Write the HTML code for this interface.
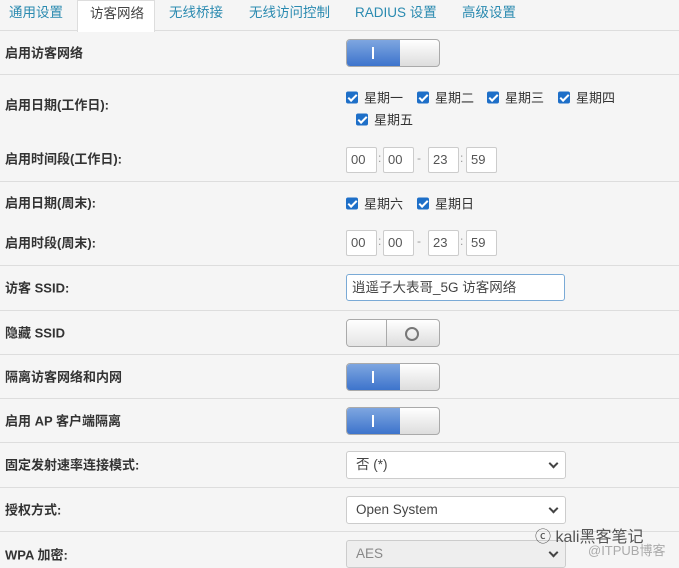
<!DOCTYPE html><html><head><meta charset="utf-8"><style>
body{margin:0;width:679px;height:563px;background:#f5f5f5;font-family:"Liberation Sans","Noto Sans CJK SC",sans-serif;position:relative;overflow:hidden;font-size:13px;color:#333}
.a{position:absolute}
.tabs{left:0;top:0;width:679px;height:30px;border-bottom:1px solid #ddd;background:#f5f5f5}
.tab{position:absolute;top:0;height:30px;line-height:25px;color:#2a8ab0;font-size:13.5px}
.act{background:#fff;color:#444;border:1px solid #ddd;border-bottom:none;height:31px}
.hr{position:absolute;left:0;width:679px;height:1px;background:#ddd}
.lb{position:absolute;left:5px;font-weight:bold;font-size:13px;color:#333;transform:translateY(-50%)}
.sw{position:absolute;left:346px;width:92px;height:26px;border:1px solid #aaa;border-radius:4px;overflow:hidden;background:linear-gradient(#fff,#ddd)}
.sw .on{position:absolute;left:0;top:0;width:53px;height:26px;background:linear-gradient(#7ea6e0,#3d74cc);}
.sw .on:after{content:"";position:absolute;left:25px;top:7px;width:2px;height:12px;background:#fff}
.sw .off{position:absolute;left:0;top:0;width:39px;height:26px;border-right:1px solid #aaa;background:linear-gradient(#fff,#e4e4e4)}
.cb{position:absolute;font-size:13px;color:#333;transform:translateY(-50%)}
.cb i{display:inline-block;width:12px;height:12px;background:#1e6fc8;border-radius:2px;vertical-align:-1px;margin-right:6px;position:relative}
.cb i:after{content:"";position:absolute;left:4px;top:1px;width:3px;height:7px;border:solid #fff;border-width:0 2px 2px 0;transform:rotate(45deg)}
.tb{position:absolute;width:29px;height:24px;background:#fff;border:1px solid #ccc;border-radius:2px;line-height:24px;text-indent:4px;color:#555;font-size:13px}
.sep{position:absolute;color:#999;font-size:12px}
.sel{position:absolute;left:346px;width:218px;height:26px;background:#fff;border:1px solid #ccc;border-radius:3px;line-height:26px;text-indent:9px;color:#444;font-size:13.5px}
.sel:after{content:"";position:absolute;right:8px;top:8px;width:5px;height:5px;border:solid #444;border-width:0 2px 2px 0;transform:rotate(45deg)}
</style></head><body>
<div class="a tabs"></div>
<div class="tab" style="left:9px">通用设置</div>
<div class="tab act" style="left:77px;width:76px;text-indent:12px">访客网络</div>
<div class="tab" style="left:169px">无线桥接</div>
<div class="tab" style="left:249px">无线访问控制</div>
<div class="tab" style="left:355px">RADIUS 设置</div>
<div class="tab" style="left:462px">高级设置</div>

<div class="lb" style="top:52px">启用访客网络</div>
<div class="sw" style="top:39px"><div class="on"></div></div>
<div class="hr" style="top:74px"></div>

<div class="lb" style="top:104px">启用日期(工作日):</div>
<div class="cb" style="left:346px;top:97px"><i></i>星期一</div>
<div class="cb" style="left:417px;top:97px"><i></i>星期二</div>
<div class="cb" style="left:487px;top:97px"><i></i>星期三</div>
<div class="cb" style="left:558px;top:97px"><i></i>星期四</div>
<div class="cb" style="left:356px;top:119px"><i></i>星期五</div>

<div class="lb" style="top:158px">启用时间段(工作日):</div>
<div class="tb" style="left:346px;top:147px">00</div><div class="sep" style="left:378px;top:151px">:</div>
<div class="tb" style="left:383px;top:147px">00</div><div class="sep" style="left:417px;top:151px">-</div>
<div class="tb" style="left:428px;top:147px">23</div><div class="sep" style="left:460px;top:151px">:</div>
<div class="tb" style="left:466px;top:147px">59</div>
<div class="hr" style="top:181px"></div>

<div class="lb" style="top:202px">启用日期(周末):</div>
<div class="cb" style="left:346px;top:203px"><i></i>星期六</div>
<div class="cb" style="left:417px;top:203px"><i></i>星期日</div>

<div class="lb" style="top:242px">启用时段(周末):</div>
<div class="tb" style="left:346px;top:230px">00</div><div class="sep" style="left:378px;top:234px">:</div>
<div class="tb" style="left:383px;top:230px">00</div><div class="sep" style="left:417px;top:234px">-</div>
<div class="tb" style="left:428px;top:230px">23</div><div class="sep" style="left:460px;top:234px">:</div>
<div class="tb" style="left:466px;top:230px">59</div>
<div class="hr" style="top:265px"></div>

<div class="lb" style="top:287px">访客 SSID:</div>
<div class="a" style="left:346px;top:274px;width:217px;height:25px;background:#fff;border:1px solid #7aaad6;border-radius:3px;line-height:25px;text-indent:5px;color:#444;font-size:13.5px">逍遥子大表哥_5G 访客网络</div>
<div class="hr" style="top:310px"></div>

<div class="lb" style="top:332px">隐藏 SSID</div>
<div class="sw" style="top:319px"><div class="off"></div><div class="a" style="left:58px;top:7px;width:10px;height:10px;border:2px solid #777;border-radius:50%"></div></div>
<div class="hr" style="top:354px"></div>

<div class="lb" style="top:376px">隔离访客网络和内网</div>
<div class="sw" style="top:363px"><div class="on"></div></div>
<div class="hr" style="top:398px"></div>

<div class="lb" style="top:420px">启用 AP 客户端隔离</div>
<div class="sw" style="top:407px"><div class="on"></div></div>
<div class="hr" style="top:442px"></div>

<div class="lb" style="top:464px">固定发射速率连接模式:</div>
<div class="sel" style="top:451px">否 (*)</div>
<div class="hr" style="top:487px"></div>

<div class="lb" style="top:509px">授权方式:</div>
<div class="sel" style="top:496px">Open System</div>
<div class="hr" style="top:531px"></div>

<div class="lb" style="top:554px">WPA 加密:</div>
<div class="sel" style="top:540px;background:#eee;color:#888">AES</div>

<div class="a" style="left:535px;top:523px;color:#555;font-size:16px">ⓒ kali黑客笔记</div>
<div class="a" style="left:588px;top:540px;color:#aaa;font-size:13px">@ITPUB博客</div>
</body></html>
